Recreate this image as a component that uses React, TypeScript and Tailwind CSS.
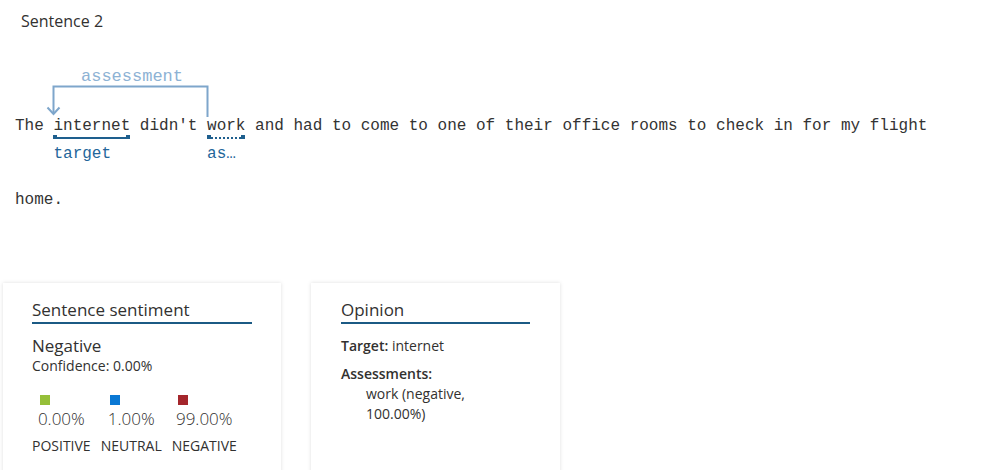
import React from 'react';

const sans = { fontFamily: '"Open Sans", "Noto Sans", sans-serif' };

const words = ['The', 'internet', "didn't", 'work', 'and', 'had', 'to', 'come', 'to', 'one', 'of', 'their', 'office', 'rooms', 'to', 'check', 'in', 'for', 'my', 'flight'];

const Word: React.FC<{ text: string; kind?: 'target' | 'assessment' }> = ({ text, kind }) => {
  return (
    <span className="relative inline-block pt-[24px] pb-[30px] leading-[20px] whitespace-pre">
      {text}
      {kind && (
        <>
          <span
            className={
              kind === 'target'
                ? 'absolute left-0 right-0 top-[45px] h-0 border-t-2 border-[#1e5f8e]'
                : 'absolute left-0 right-0 top-[45px] h-0 border-t-2 border-dotted border-[#1e5f8e]'
            }
          />
          <span className="absolute left-0 top-[43px] w-[4px] h-[4px] bg-[#1e5f8e]" />
          <span className="absolute right-0 top-[43px] w-[4px] h-[4px] bg-[#1e5f8e]" />
          <span
            className={
              kind === 'target'
                ? 'absolute left-0 top-[52px] whitespace-nowrap text-[#23669a]'
                : 'absolute left-0 top-[52px] w-[36px] overflow-hidden text-ellipsis whitespace-nowrap text-[#23669a]'
            }
          >
            {kind}
          </span>
        </>
      )}
    </span>
  );
};

const App: React.FC = () => {
  return (
    <div className="w-[991px] h-[470px] overflow-hidden bg-white text-[#323130]" style={sans}>
      <div className="pl-[21px] pt-[10px] text-[16px] leading-[22px]">Sentence 2</div>

      <div
        className="relative ml-[15px] mt-[60px] w-[930px] text-[16px] text-[#333]"
        style={{ fontFamily: '"Liberation Mono", monospace' }}
      >
        <svg className="absolute left-0 top-[-30px]" width="220" height="60" viewBox="0 0 220 60">
          <path d="M38.5 52 V24.5 H192.5 V55" fill="none" stroke="#7ea6cb" strokeWidth="2" />
          <path d="M32.5 45.5 L38.5 52 L44.5 45.5" fill="none" stroke="#7ea6cb" strokeWidth="2" />
        </svg>
        <span className="absolute left-[66px] top-[-25px] leading-[20px] text-[17px] text-[#8db2d4]">assessment</span>
        <div className="flex flex-wrap">
          {words.map((w, i) => (
            <React.Fragment key={i}>
              <Word text={w} kind={i === 1 ? 'target' : i === 3 ? 'assessment' : undefined} />
              <span className="inline-block pt-[24px] leading-[20px] whitespace-pre"> </span>
            </React.Fragment>
          ))}
          <Word text="home." />
        </div>
      </div>

      <div className="flex gap-[30px] pl-[3px] mt-[43px]">
        <div className="w-[278px] h-[200px] bg-white shadow-[0_0_4px_rgba(0,0,0,0.13)] px-[29px] pt-[16px]">
          <div className="text-[17px] leading-[22px] pb-[1px] border-b-2 border-[#1b5a84]">Sentence sentiment</div>
          <div className="mt-[11px] text-[17px] leading-[22px]">Negative</div>
          <div className="text-[14px] leading-[18px]">Confidence: 0.00%</div>
          <div className="flex gap-[10px] mt-[20px]">
            {[
              ['0.00%', 'POSITIVE', 'bg-[#95bf39]'],
              ['1.00%', 'NEUTRAL', 'bg-[#0a78d4]'],
              ['99.00%', 'NEGATIVE', 'bg-[#a4262c]'],
            ].map(([pct, label, color]) => (
              <div key={label} className="flex flex-col items-center">
                <div className="flex flex-col items-start">
                  <span className={`w-[10px] h-[10px] ml-[2px] ${color}`} />
                  <span className="text-[17px] font-light leading-[24px] mt-[2px]">{pct}</span>
                </div>
                <span className="text-[14px] leading-[20px] mt-[5px]">{label}</span>
              </div>
            ))}
          </div>
        </div>

        <div className="w-[249px] h-[200px] bg-white shadow-[0_0_4px_rgba(0,0,0,0.13)] px-[30px] pt-[16px]">
          <div className="text-[17px] leading-[22px] pb-[1px] border-b-2 border-[#1b5a84]">Opinion</div>
          <div className="mt-[12px] text-[14px] leading-[20px]">
            <span className="font-semibold">Target:</span> internet
          </div>
          <div className="mt-[8px] text-[14px] leading-[20px] font-semibold">Assessments:</div>
          <div className="ml-[25px] w-[120px] text-[14px] leading-[20px]">work (negative, 100.00%)</div>
        </div>
      </div>
    </div>
  );
};

export default App;
